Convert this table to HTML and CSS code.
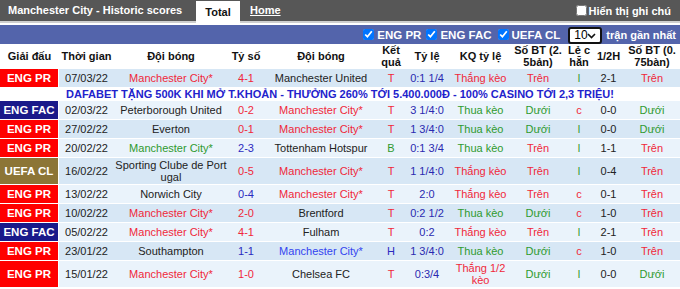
FILE: index.html
```html
<!DOCTYPE html>
<html lang="vi">
<head>
<meta charset="utf-8">
<title>Manchester City - Historic scores</title>
<link rel="stylesheet" href="styles.css">
</head>
<body>
<div class="page">
  <div class="topbar">
    <div class="title">Manchester City - Historic scores</div>
    <div class="tab tab-active">Total</div>
    <div class="tab tab-link">Home</div>
    <label class="note"><input type="checkbox" class="cb cb-white"><span>Hiển thị ghi chú</span></label>
  </div>
  <div class="gap"></div>
  <div class="filterbar">
    <label class="flt"><input type="checkbox" class="cb" checked><span>ENG PR</span></label>
    <label class="flt"><input type="checkbox" class="cb" checked><span>ENG FAC</span></label>
    <label class="flt"><input type="checkbox" class="cb" checked><span>UEFA CL</span></label>
    <div class="selwrap">
      <select class="sel"><option>10</option></select>
      <svg class="chev" width="9" height="6" viewBox="0 0 9 6"><path d="M1 1 L4.5 4.5 L8 1" fill="none" stroke="#111" stroke-width="1.6"/></svg>
    </div>
    <span class="recent">trận gần nhất</span>
  </div>
  <table class="tbl">
    <colgroup>
      <col class="w1"><col class="w2"><col class="w3"><col class="w4"><col class="w5"><col class="w6">
      <col class="w7"><col class="w8"><col class="w9"><col class="w10"><col class="w11"><col class="w12">
    </colgroup>
    <thead>
      <tr class="head">
        <th>Giải đấu</th><th>Thời gian</th><th>Đội bóng</th><th>Tỷ số</th><th>Đội bóng</th><th>Kết quả</th>
        <th>Tỷ lệ</th><th>KQ tỷ lệ</th><th>Số BT (2.5bản)</th><th>Lẻ chẵn</th><th>1/2H</th><th>Số BT (0.75bàn)</th>
      </tr>
    </thead>
    <tbody>
      <tr class="r1">
        <td class="lg epr">ENG PR</td><td>07/03/22</td><td class="red">Manchester City*</td><td class="red">4-1</td><td>Manchester United</td><td class="red">T</td>
        <td class="hc">0:1 1/4</td><td class="red kq">Thắng kèo</td><td class="red">Trên</td><td class="grn">l</td><td>2-1</td><td class="red">Trên</td>
      </tr>
      <tr class="ad"><td colspan="12">DAFABET TẶNG 500K KHI MỞ T.KHOẢN - THƯỞNG 260% TỚI 5.400.000Đ - 100% CASINO TỚI 2,3 TRIỆU!</td></tr>
      <tr class="r2">
        <td class="lg efac">ENG FAC</td><td>02/03/22</td><td>Peterborough United</td><td class="red">0-2</td><td class="red">Manchester City*</td><td class="red">T</td>
        <td class="hc">3 1/4:0</td><td class="grn kq">Thua kèo</td><td class="grn">Dưới</td><td class="red">c</td><td>0-0</td><td class="grn">Dưới</td>
      </tr>
      <tr class="r1">
        <td class="lg epr">ENG PR</td><td>27/02/22</td><td>Everton</td><td class="red">0-1</td><td class="red">Manchester City*</td><td class="red">T</td>
        <td class="hc">1 3/4:0</td><td class="grn kq">Thua kèo</td><td class="grn">Dưới</td><td class="grn">l</td><td>0-0</td><td class="grn">Dưới</td>
      </tr>
      <tr class="r2">
        <td class="lg epr">ENG PR</td><td>20/02/22</td><td class="grn">Manchester City*</td><td class="blu">2-3</td><td>Tottenham Hotspur</td><td class="grn">B</td>
        <td class="hc">0:1 3/4</td><td class="grn kq">Thua kèo</td><td class="red">Trên</td><td class="grn">l</td><td>1-1</td><td class="red">Trên</td>
      </tr>
      <tr class="r1">
        <td class="lg ucl">UEFA CL</td><td>16/02/22</td><td>Sporting Clube de Portugal</td><td class="red">0-5</td><td class="red">Manchester City*</td><td class="red">T</td>
        <td class="hc">1 1/4:0</td><td class="red kq">Thắng kèo</td><td class="red">Trên</td><td class="grn">l</td><td>0-4</td><td class="red">Trên</td>
      </tr>
      <tr class="r2">
        <td class="lg epr">ENG PR</td><td>13/02/22</td><td>Norwich City</td><td class="blu">0-4</td><td class="red">Manchester City*</td><td class="red">T</td>
        <td class="hc">2:0</td><td class="red kq">Thắng kèo</td><td class="red">Trên</td><td class="red">c</td><td>0-1</td><td class="red">Trên</td>
      </tr>
      <tr class="r1">
        <td class="lg epr">ENG PR</td><td>10/02/22</td><td class="red">Manchester City*</td><td class="red">2-0</td><td>Brentford</td><td class="red">T</td>
        <td class="hc">0:2 1/2</td><td class="grn kq">Thua kèo</td><td class="grn">Dưới</td><td class="red">c</td><td>1-0</td><td class="red">Trên</td>
      </tr>
      <tr class="r2">
        <td class="lg efac">ENG FAC</td><td>05/02/22</td><td class="red">Manchester City*</td><td class="red">4-1</td><td>Fulham</td><td class="red">T</td>
        <td class="hc">0:2</td><td class="red kq">Thắng kèo</td><td class="red">Trên</td><td class="grn">l</td><td>2-1</td><td class="red">Trên</td>
      </tr>
      <tr class="r1">
        <td class="lg epr">ENG PR</td><td>23/01/22</td><td>Southampton</td><td class="blu">1-1</td><td class="blu2">Manchester City*</td><td class="blu">H</td>
        <td class="hc">1 3/4:0</td><td class="grn kq">Thua kèo</td><td class="grn">Dưới</td><td class="red">c</td><td>1-0</td><td class="red">Trên</td>
      </tr>
      <tr class="r2">
        <td class="lg epr">ENG PR</td><td>15/01/22</td><td class="red">Manchester City*</td><td class="red">1-0</td><td>Chelsea FC</td><td class="red">T</td>
        <td class="hc">0:3/4</td><td class="red kq">Thắng 1/2 kèo</td><td class="grn">Dưới</td><td class="grn">l</td><td>0-0</td><td class="grn">Dưới</td>
      </tr>
    </tbody>
  </table>
</div>
</body>
</html>
```

FILE: styles.css
```css
* { box-sizing: border-box; }
html, body { margin: 0; padding: 0; background: #fff; }
body { font-family: "Liberation Sans", Arial, sans-serif; font-size: 11px; color: #222; }
.page { width: 680px; overflow: hidden; }

.topbar {
  display: flex;
  align-items: stretch;
  height: 23px;
  background: #575757;
  border-bottom: 2px solid #cfcfcf;
  color: #fff;
  font-weight: bold;
  font-size: 11px;
}
.title { padding: 0 0 0 8px; width: 196px; line-height: 21px; }
.tab { line-height: 21px; }
.tab-active {
  background: #fff;
  color: #111;
  width: 44px;
  text-align: center;
  margin-top: 1px;
  height: 22px;
  line-height: 20px;
  position: relative;
  margin-bottom: -2px;
  padding-top: 1px;
}
.tab-link { margin-left: 10px; text-decoration: underline; }
.note { margin-left: auto; display: flex; align-items: center; padding-right: 9px; height: 21px; }
.gap { height: 2px; }

.cb {
  width: 11px;
  height: 11px;
  margin: 0 3px 0 0;
  accent-color: #0075ff;
}
.cb-white { margin-right: 2px; }

.filterbar {
  display: flex;
  align-items: center;
  justify-content: flex-end;
  height: 19px;
  background: #5364ab;
  color: #fff;
  font-weight: bold;
  padding-right: 4px;
}
.flt { display: flex; align-items: center; margin-right: 6px; font-size: 11.5px; }
.flt:first-child { margin-right: 5px; }
.selwrap {
  position: relative;
  align-self: flex-start;
  margin: 2px 4px 0 2px;
  width: 34px;
  height: 17px;
}
.sel {
  -webkit-appearance: none;
  appearance: none;
  display: block;
  height: 17px;
  width: 34px;
  margin: 0;
  border: 2px solid #111;
  border-radius: 3px;
  padding: 0 0 0 4px;
  font-family: "Liberation Sans", Arial, sans-serif;
  font-size: 12px;
  line-height: 13px;
  background: #fff;
  color: #000;
}
.chev {
  position: absolute;
  right: 6px;
  top: 6px;
  pointer-events: none;
}
.recent { white-space: nowrap; }

.tbl {
  width: 680px;
  table-layout: fixed;
  border-collapse: separate;
  border-spacing: 0;
  word-break: break-all;
}
.w1 { width: 59px; } .w2 { width: 55px; } .w3 { width: 114px; } .w4 { width: 36px; }
.w5 { width: 114px; } .w6 { width: 26px; } .w7 { width: 46px; } .w8 { width: 61px; }
.w9 { width: 54px; } .w10 { width: 28px; } .w11 { width: 31px; } .w12 { width: 56px; }

.head th {
  height: 25px;
  padding: 0 1px 1px;
  font-weight: bold;
  line-height: 12px;
  color: #111;
  text-align: center;
  vertical-align: middle;
  background: #fff;
}
.head th:last-child { padding: 0 2px 1px; }

tbody td {
  height: 19px;
  padding: 1px 1px;
  line-height: 12px;
  text-align: center;
  vertical-align: middle;
  border-bottom: 1px solid #fff;
  color: #222;
}
tbody td.kq { padding: 1px 4px; word-break: normal; }
.r1 td { background: #d7e7f5; }
.r2 td { background: #eaf3fb; }
td.lg {
  color: #fff;
  font-weight: bold;
  font-size: 11.5px;
  border-right: 1px solid #fff;
}
td.epr { background: #ff0000; }
td.efac { background: #1a1a8a; }
td.ucl { background: #8c7536; }

.ad td {
  height: 13px;
  padding: 0;
  line-height: 12px;
  background: #fff;
  color: #2222cc;
  font-weight: bold;
  font-size: 11px;
  text-align: center;
  word-break: normal;
  white-space: nowrap;
}

td.red { color: #f0283a; }
td.grn { color: #2f9a2f; }
td.blu { color: #2a2ac0; }
td.blu2 { color: #3344f0; }
td.hc { color: #2a2ab0; }
```
